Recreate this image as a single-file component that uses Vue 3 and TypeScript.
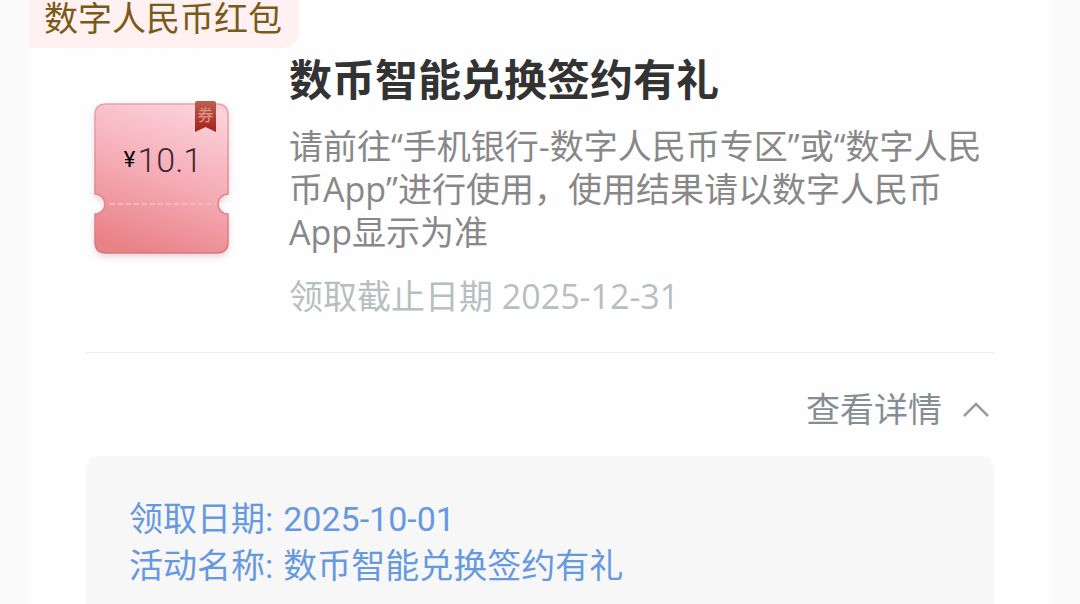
<script setup lang="ts">
import { ref } from 'vue'

interface Detail {
  label: string
  value: string
}

const category = '数字人民币红包'
const title = '数币智能兑换签约有礼'
const description =
  '请前往“手机银行-数字人民币专区”或“数字人民币App”进行使用，使用结果请以数字人民币App显示为准'
const deadline = '2025-12-31'
const amount = '10.1'
const expanded = ref(true)
const details: Detail[] = [
  { label: '领取日期', value: '2025-10-01' },
  { label: '活动名称', value: '数币智能兑换签约有礼' },
]
</script>

<template>
  <main class="page" lang="zh-CN">
    <article class="card">
      <span class="tag">{{ category }}</span>
      <div class="body">
        <section class="summary">
          <div class="ticket">
            <svg class="ticket-art" viewBox="0 0 150 170" aria-hidden="true">
              <defs>
                <linearGradient id="paper" x1="0.65" y1="0" x2="0.35" y2="1">
                  <stop offset="0" stop-color="#fbd0d8" />
                  <stop offset="0.5" stop-color="#f5abb5" />
                  <stop offset="1" stop-color="#e98287" />
                </linearGradient>
                <linearGradient id="edge" x1="0" y1="0" x2="0" y2="1">
                  <stop offset="0" stop-color="#e5a3ac" />
                  <stop offset="1" stop-color="#dc7580" />
                </linearGradient>
                <linearGradient id="ribbon" x1="0" y1="0" x2="0" y2="1">
                  <stop offset="0" stop-color="#bd5f4e" />
                  <stop offset="1" stop-color="#a41f1b" />
                </linearGradient>
                <filter id="shade" x="-10%" y="-10%" width="120%" height="120%">
                  <feDropShadow dx="0" dy="3" stdDeviation="3" flood-color="#a66f72" flood-opacity="0.28" />
                </filter>
              </defs>
              <path
                d="M20 8H131Q142 8 142 19V98A10 10 0 0 0 142 118V146Q142 157 131 157H20Q9 157 9 146V118A10 10 0 0 0 9 98V19Q9 8 20 8Z"
                fill="url(#paper)"
                stroke="url(#edge)"
                stroke-width="1.500"
                filter="url(#shade)"
              />
              <path d="M24 108H130" stroke="#f7b9c1" stroke-width="2" stroke-dasharray="5 3" />
              <path d="M109 7Q109 5 111 5H128Q130 5 130 7V36L119.500 31L109 36Z" fill="url(#ribbon)" />
              <text class="ribbon-text" x="119.500" y="25" text-anchor="middle">券</text>
            </svg>
            <p class="price"><span class="currency">¥</span>{{ amount }}</p>
          </div>
          <div class="info">
            <h1 class="title">{{ title }}</h1>
            <p class="description">{{ description }}</p>
            <p class="deadline">领取截止日期 <time :datetime="deadline">{{ deadline }}</time></p>
          </div>
        </section>
        <div class="actions">
          <button
            class="toggle"
            type="button"
            :aria-expanded="expanded"
            aria-controls="details"
            @click="expanded = !expanded"
          >
            查看详情
            <svg class="chevron" :class="{ closed: !expanded }" viewBox="0 0 28 18" aria-hidden="true">
              <path d="M2 15L14 3L26 15" fill="none" stroke="#999b9e" stroke-width="2.500" />
            </svg>
          </button>
        </div>
        <dl v-show="expanded" id="details" class="details">
          <div v-for="item in details" :key="item.label" class="detail">
            <dt>{{ item.label }}:</dt>
            <dd>{{ item.value }}</dd>
          </div>
        </dl>
      </div>
    </article>
  </main>
</template>

<style>
body {
  margin: 0;
  background: #fafafa;
}
</style>

<style scoped>
.page {
  box-sizing: border-box;
  height: 100vh;
  overflow: hidden;
  padding: 0 29px;
  background: #fafafa;
  font-family: Roboto, "Noto Sans CJK SC", sans-serif;
  font-size: 34px;
}

.card {
  min-height: 100%;
  background: #fefefe;
}

.tag {
  display: block;
  width: fit-content;
  padding: 0 17px 10px 15px;
  border-radius: 0 0 16px 0;
  background: #fff1f1;
  color: #7b5a17;
  line-height: 38px;
}

.body {
  padding: 6px 57px 0;
}

.summary {
  display: grid;
  grid-template-columns: 150px minmax(0, 1fr);
  column-gap: 53px;
  padding-bottom: 34px;
  border-bottom: 1px solid #ebebeb;
}

.ticket {
  position: relative;
  margin-top: 42px;
}

.ticket-art {
  display: block;
  width: 100%;
}

.ribbon-text {
  fill: #d99084;
  font-size: 16px;
  font-weight: 500;
}

.price {
  position: absolute;
  top: 44px;
  left: 0;
  box-sizing: border-box;
  display: flex;
  align-items: center;
  justify-content: center;
  gap: 2px;
  width: 100%;
  margin: 0;
  padding-left: 4px;
  color: #3d292d;
  font-size: 34px;
  font-weight: 300;
  line-height: 40px;
}

.currency {
  color: #000;
  font-size: 22px;
  font-weight: 400;
}

.title {
  margin: 0;
  color: #333;
  font-size: 43px;
  font-weight: 700;
  line-height: 54px;
}

.description {
  margin: 17px 0 0;
  color: #888;
  font-family: "Open Sans", "Noto Sans CJK SC", sans-serif;
  line-height: 43px;
}

.deadline {
  margin: 21px 0 0;
  color: #b8bfbf;
  font-family: "Open Sans", "Noto Sans CJK SC", sans-serif;
  line-height: 43px;
}

.actions {
  display: flex;
  justify-content: flex-end;
  padding: 35px 4px 24px 0;
}

.toggle {
  display: flex;
  align-items: center;
  gap: 20px;
  padding: 0;
  border: 0;
  background: none;
  color: #858e94;
  font: inherit;
  line-height: 44px;
  cursor: pointer;
}

.chevron {
  width: 28px;
  height: 18px;
}

.closed {
  transform: rotate(180deg);
}

.details {
  min-height: 150px;
  margin: 0;
  padding: 40px 43px;
  border-radius: 14px;
  background: #f7f7f7;
  color: #6699e0;
  line-height: 47px;
}

.detail {
  display: flex;
  gap: 10px;
}

.detail dd {
  margin: 0;
}
</style>
